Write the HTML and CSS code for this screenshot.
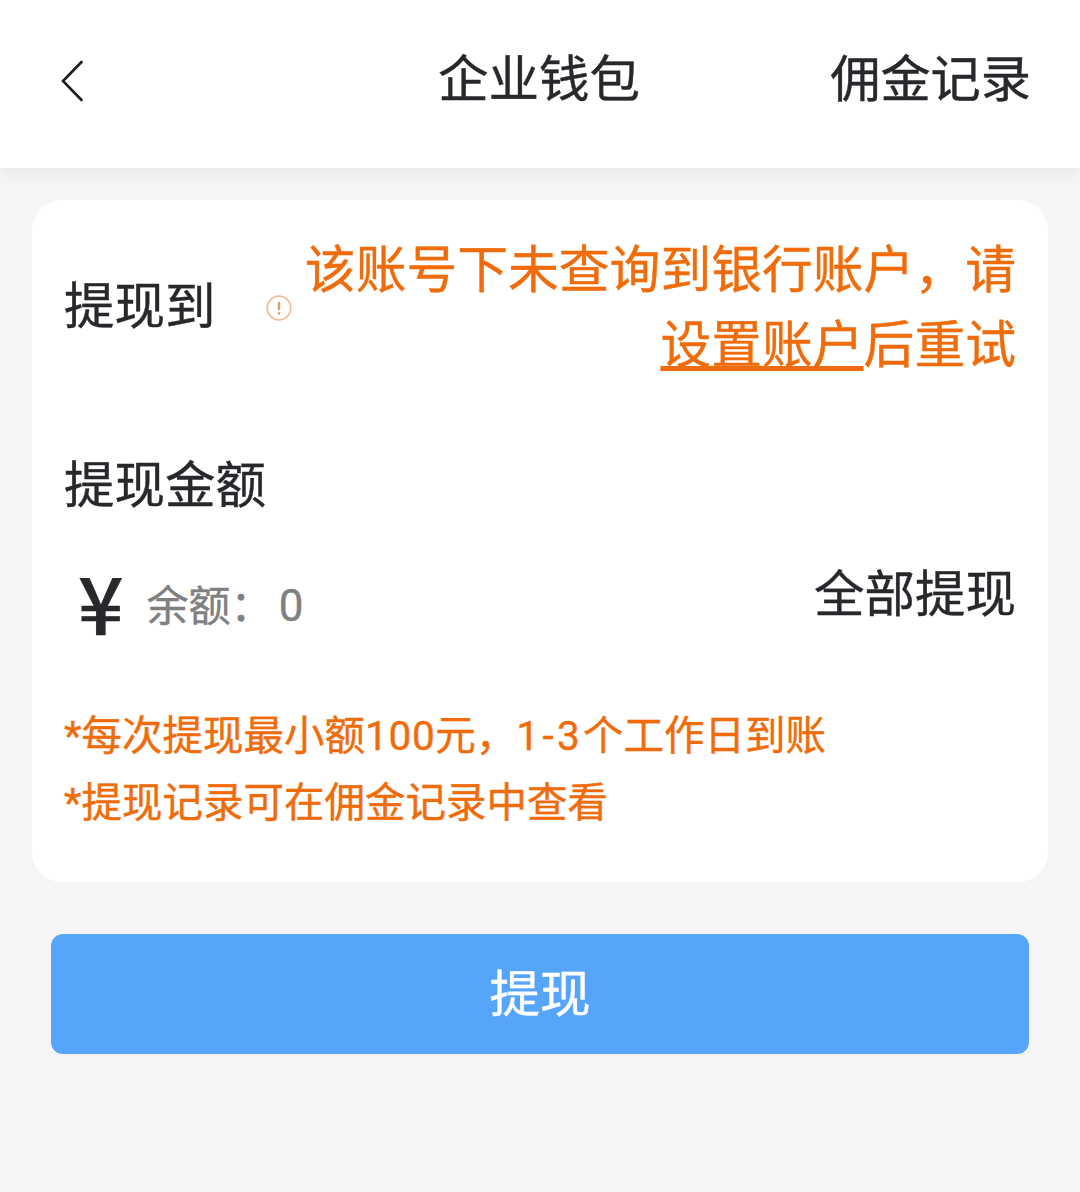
FILE: index.html
```html
<!DOCTYPE html>
<html lang="zh">
<head>
<meta charset="utf-8">
<title>企业钱包</title>
<link rel="stylesheet" href="styles.css">
</head>
<body>
<header class="nav">
  <svg class="back" width="24" height="42" viewBox="0 0 24 42"><path d="M21.5 2 L3 21 L21.5 40" fill="none" stroke="#1c1d20" stroke-width="2.6" stroke-linecap="round" stroke-linejoin="miter"/></svg>
  <h1 class="title">企业钱包</h1>
  <span class="nav-link">佣金记录</span>
</header>
<main class="card">
  <section class="row-to">
    <span class="label">提现到</span>
    <svg class="warn" width="26" height="26" viewBox="0 0 26 26"><circle cx="13" cy="13" r="11.8" fill="none" stroke="#efc09a" stroke-width="1.8"/><path d="M13 7v8M13 17.2v2.4" stroke="#e99a5c" stroke-width="2.4" fill="none"/></svg>
    <p class="notice">该账号下未查询到银行账户，请<br><a class="notice-link">设置账户</a>后重试</p>
  </section>
  <div class="label amount-label">提现金额</div>
  <section class="row-amount">
    <span class="yen">¥</span>
    <span class="balance">余额：<span class="balance-value">0</span></span>
    <span class="all">全部提现</span>
  </section>
  <div class="tips">
    <p>*每次提现最小额<span class="num">100</span>元，<span class="range">1-3</span>个工作日到账</p>
    <p>*提现记录可在佣金记录中查看</p>
  </div>
</main>
<button class="submit">提现</button>
</body>
</html>
```
FILE: styles.css
```css
* { box-sizing: border-box; margin: 0; padding: 0; }
html, body { height: 100%; }
body {
  background: #f5f5f5;
  font-family: "Roboto", "Noto Sans CJK SC", "Noto Sans", sans-serif;
  color: #26282c;
  overflow: hidden;
  -webkit-text-stroke: 0.4px currentColor;
}
.nav {
  height: 168px;
  background: #fff;
  display: flex;
  align-items: center;
  justify-content: space-between;
  padding: 0 49px 6px 60px;
  position: relative;
  box-shadow: 0 4px 16px rgba(0,0,0,.06);
}
.title {
  font-size: 50.5px;
  font-weight: 400;
  line-height: 70px;
  padding: 0 2px 2px 0;
  position: absolute;
  left: 0;
  right: 0;
  text-align: center;
}
.nav-link { font-size: 50.2px; line-height: 70px; padding-bottom: 2px; position: relative; }
.card {
  margin: 32px 32px 0;
  height: 682px;
  background: #fff;
  border-radius: 30px;
  padding: 32px 32px 0 32px;
}
.label { font-size: 50.5px; line-height: 70px; }
.row-to { display: flex; align-items: center; height: 150px; }
.warn { margin-left: 50px; margin-top: 2px; flex: none; }
.notice {
  flex: 1;
  text-align: right;
  font-size: 50.8px;
  line-height: 75px;
  padding-top: 2px;
  color: #f06c0a;
}
.notice-link {
  text-decoration: underline;
  text-decoration-thickness: 5px;
  text-underline-offset: 3px;
}
.amount-label { margin-top: 69px; }
.row-amount { display: flex; align-items: center; height: 90px; margin-top: 31px; }
.yen {
  font-family: "Noto Sans CJK SC", sans-serif;
  font-size: 80px;
  font-weight: 500;
  margin-left: 14px;
  line-height: 90px;
  position: relative;
  top: 3px;
}
.balance { font-size: 42px; color: #808080; margin-left: 23px; padding-top: 10px; }
.balance-value { margin-left: 6px; font-size: 44px; }
.all { font-size: 50.5px; margin-left: auto; line-height: 70px; margin-top: -4px; }
.tips { margin-top: 61px; font-size: 40.5px; line-height: 67px; color: #f06c0a; }
.num { letter-spacing: 0.7px; }
.range { letter-spacing: 3.3px; }
.submit {
  display: block;
  width: 978px;
  height: 120px;
  margin: 52px auto 0;
  border: 0;
  border-radius: 12px;
  background: #57a5fb;
  color: #fff;
  font-family: inherit;
  font-size: 50.5px;
  padding-bottom: 8px;
}
```
